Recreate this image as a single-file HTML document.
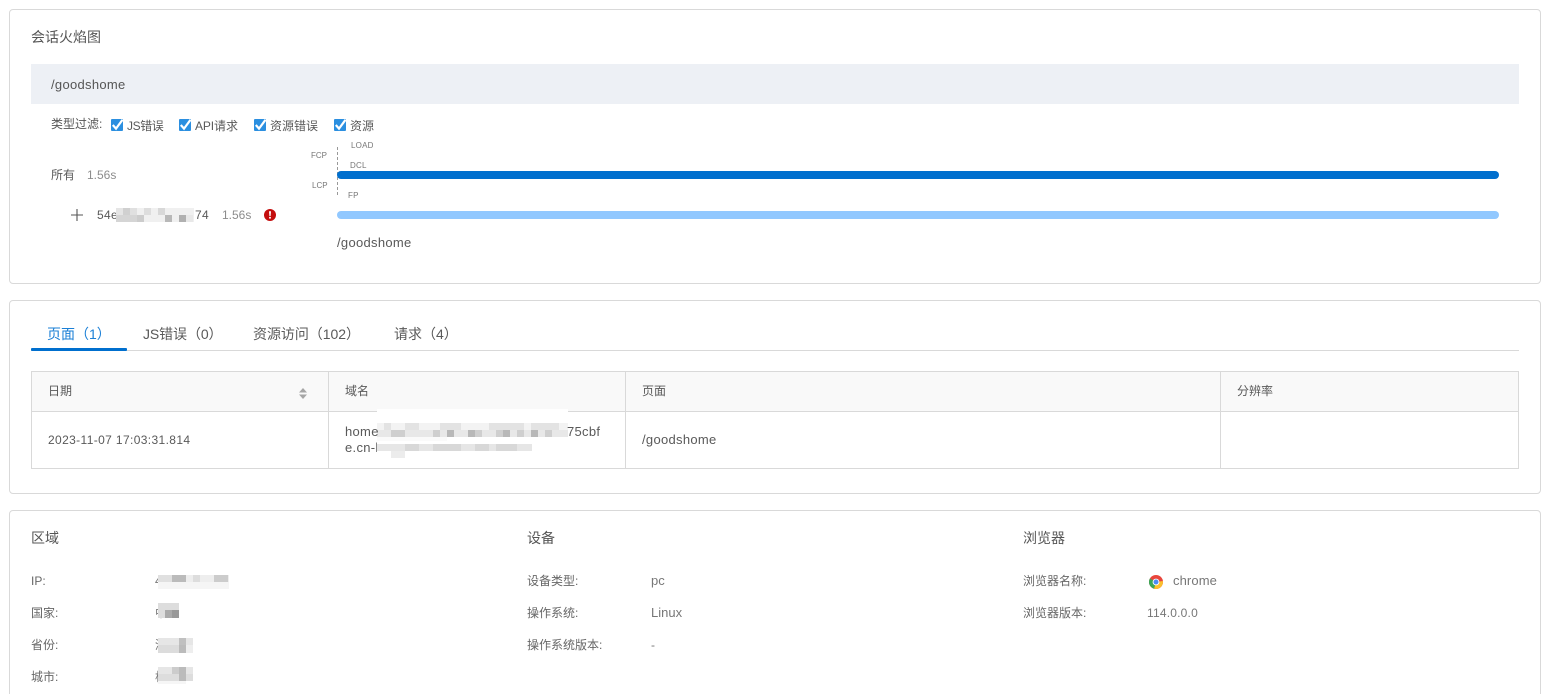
<!DOCTYPE html>
<html lang="zh">
<head>
<meta charset="utf-8">
<style>
html,body{margin:0;padding:0;background:#fff;width:1550px;height:694px;overflow:hidden}
body{position:relative;font-family:"Liberation Sans","Noto Sans CJK SC",sans-serif;font-size:12px;color:#595959}
.a{position:absolute;white-space:nowrap;line-height:16px}
.card{position:absolute;left:9px;width:1530px;border:1px solid #d9d9d9;border-radius:4px;background:#fff;box-sizing:content-box}
.s{font-size:13px;letter-spacing:.3px}
.g{color:#8c8c8c}
.cb{position:absolute;width:12px;height:12px;background:#2b8fe0;border-radius:1px}
.cb svg{position:absolute;left:0;top:0;overflow:visible}
.tiny{font-size:8px;color:#777;letter-spacing:.2px;line-height:10px}
.lbl{color:#666}
.val{color:#777}
.h{font-size:14px;color:#555}
.t{font-size:14px;line-height:16px}
svg.px{position:absolute;left:0;top:0}
</style>
</head>
<body>
<div class="card" style="top:9px;height:273px"></div>
<div class="card" style="top:300px;height:192px"></div>
<div class="card" style="top:510px;height:200px"></div>

<div class="a h" style="left:31px;top:29px">会话火焰图</div>
<div style="position:absolute;left:31px;top:64px;width:1488px;height:40px;background:#edf0f5"></div>
<div class="a s" style="left:51px;top:77px;color:#555">/goodshome</div>

<div class="a" style="left:51px;top:116px;color:#555">类型过滤:</div>
<div class="cb" style="left:111px;top:119px"><svg width="12" height="12"><path d="M1.8 6L5 9.6L11.5 .8" fill="none" stroke="#fff" stroke-width="2.2"/></svg></div>
<div class="a" style="left:127px;top:118px;letter-spacing:-.4px">JS错误</div>
<div class="cb" style="left:179px;top:119px"><svg width="12" height="12"><path d="M1.8 6L5 9.6L11.5 .8" fill="none" stroke="#fff" stroke-width="2.2"/></svg></div>
<div class="a" style="left:195px;top:118px;letter-spacing:-.1px">API请求</div>
<div class="cb" style="left:254px;top:119px"><svg width="12" height="12"><path d="M1.8 6L5 9.6L11.5 .8" fill="none" stroke="#fff" stroke-width="2.2"/></svg></div>
<div class="a" style="left:270px;top:118px">资源错误</div>
<div class="cb" style="left:334px;top:119px"><svg width="12" height="12"><path d="M1.8 6L5 9.6L11.5 .8" fill="none" stroke="#fff" stroke-width="2.2"/></svg></div>
<div class="a" style="left:350px;top:118px">资源</div>

<div class="a" style="left:51px;top:167px">所有</div>
<div class="a g" style="left:87px;top:167px">1.56s</div>

<svg style="position:absolute;left:71px;top:209px" width="12" height="12"><path d="M6 0V12M0 6H12" stroke="#555" stroke-width="1.1"/></svg>
<div class="a" style="left:97px;top:207px;letter-spacing:.3px">54e</div>
<div class="a" style="left:195px;top:207px;letter-spacing:.3px">74</div>
<div class="a g" style="left:222px;top:207px">1.56s</div>
<svg style="position:absolute;left:264px;top:209px" width="12" height="12" viewBox="0 0 12 12"><circle cx="6" cy="6" r="6" fill="#c40d0d"/><path d="M5 2.2H7L6.6 7H5.4Z" fill="#fff"/><circle cx="6" cy="8.8" r="1" fill="#fff"/></svg>

<div class="a tiny" style="left:351px;top:141px">LOAD</div>
<div class="a tiny" style="left:311px;top:151px;letter-spacing:0">FCP</div>
<div class="a tiny" style="left:350px;top:161px">DCL</div>
<div class="a tiny" style="left:312px;top:181px;letter-spacing:0">LCP</div>
<div class="a tiny" style="left:348px;top:191px">FP</div>
<div style="position:absolute;left:337px;top:147px;height:48px;border-left:1px dashed #999"></div>
<div style="position:absolute;left:337px;top:171px;width:1162px;height:8px;border-radius:4px;background:#006fce"></div>
<div style="position:absolute;left:337px;top:211px;width:1162px;height:8px;border-radius:4px;background:#91c8ff"></div>
<div class="a s" style="left:337px;top:235px">/goodshome</div>

<!-- tabs -->
<div class="a t" style="left:47px;top:326px;color:#1a7fd6">页面（1）</div>
<div class="a t" style="left:143px;top:326px;letter-spacing:-.1px">JS错误（0）</div>
<div class="a t" style="left:253px;top:326px;letter-spacing:-.05px">资源访问（102）</div>
<div class="a t" style="left:394px;top:326px">请求（4）</div>
<div style="position:absolute;left:31px;top:350px;width:1488px;height:1px;background:#d9d9d9"></div>
<div style="position:absolute;left:31px;top:348px;width:96px;height:3px;background:#006fce;border-radius:1px"></div>

<!-- table -->
<div style="position:absolute;left:31px;top:371px;width:1486px;height:96px;border:1px solid #d9d9d9"></div>
<div style="position:absolute;left:32px;top:372px;width:1486px;height:39px;background:#f9f9f9"></div>
<div style="position:absolute;left:31px;top:411px;width:1488px;height:1px;background:#d9d9d9"></div>
<div style="position:absolute;left:328px;top:372px;width:1px;height:96px;background:#d9d9d9"></div>
<div style="position:absolute;left:625px;top:372px;width:1px;height:96px;background:#d9d9d9"></div>
<div style="position:absolute;left:1220px;top:372px;width:1px;height:96px;background:#d9d9d9"></div>
<div class="a" style="left:48px;top:383px">日期</div>
<svg style="position:absolute;left:298px;top:388px" width="10" height="12"><path d="M5 0L9 4.5H1Z M5 11L9 6.5H1Z" fill="#a6a6a6"/></svg>
<div class="a" style="left:345px;top:383px">域名</div>
<div class="a" style="left:642px;top:383px">页面</div>
<div class="a" style="left:1237px;top:383px">分辨率</div>
<div class="a" style="left:48px;top:432px;letter-spacing:.37px">2023-11-07 17:03:31.814</div>

<!-- info -->
<div class="a h" style="left:31px;top:530px">区域</div>
<div class="a h" style="left:527px;top:530px">设备</div>
<div class="a h" style="left:1023px;top:530px">浏览器</div>
<div class="a lbl" style="left:31px;top:573px">IP:</div>
<div class="a lbl" style="left:31px;top:605px">国家:</div>
<div class="a lbl" style="left:31px;top:637px">省份:</div>
<div class="a lbl" style="left:31px;top:669px">城市:</div>
<div class="a val" style="left:155px;top:573px">4</div>
<div class="a val" style="left:155px;top:605px">中</div>
<div class="a val" style="left:155px;top:637px">浙</div>
<div class="a val" style="left:155px;top:669px">杭</div>

<div class="a lbl" style="left:527px;top:573px">设备类型:</div>
<div class="a lbl" style="left:527px;top:605px">操作系统:</div>
<div class="a lbl" style="left:527px;top:637px">操作系统版本:</div>
<div class="a val" style="left:651px;top:573px;font-size:13px">pc</div>
<div class="a val" style="left:651px;top:605px;font-size:13px">Linux</div>
<div class="a val" style="left:651px;top:637px">-</div>

<div class="a lbl" style="left:1023px;top:573px">浏览器名称:</div>
<div class="a lbl" style="left:1023px;top:605px">浏览器版本:</div>
<svg style="position:absolute;left:1149px;top:575px" width="14" height="14" viewBox="0 0 14 14">
<circle cx="7" cy="7" r="7" fill="#e8453c"/>
<path d="M7 7L13.9 6A7 7 0 0 1 5 13.7Z" fill="#fbc02d"/>
<path d="M7 7L5 13.7A7 7 0 0 1 .9 3.5Z" fill="#3aa757"/>
<circle cx="7" cy="7" r="3.4" fill="#fff"/><circle cx="7" cy="7" r="2.5" fill="#4a8bf5"/>
</svg>
<div class="a val s" style="left:1173px;top:573px;letter-spacing:.1px">chrome</div>
<div class="a val" style="left:1147px;top:605px;letter-spacing:.2px">114.0.0.0</div>

<!-- mosaics -->
<svg class="px" width="1550" height="694" shape-rendering="crispEdges">
<rect x="377" y="409" width="191" height="3" fill="#fff"/>
<!-- 54e mosaic -->
<rect x="116" y="208" width="78" height="14" fill="#f0f0f0"/>
<rect x="116" y="208" width="7" height="7" fill="#e5e5e5"/><rect x="123" y="208" width="7" height="7" fill="#d0d0d0"/><rect x="130" y="208" width="7" height="7" fill="#e0e0e0"/><rect x="144" y="208" width="7" height="7" fill="#ddd"/><rect x="158" y="208" width="7" height="7" fill="#d8d8d8"/>
<rect x="116" y="215" width="21" height="7" fill="#d5d5d5"/><rect x="137" y="215" width="7" height="7" fill="#ccc"/><rect x="165" y="215" width="7" height="7" fill="#b8b8b8"/><rect x="179" y="215" width="7" height="7" fill="#b0b0b0"/><rect x="186" y="215" width="7" height="7" fill="#e8e8e8"/>
<!-- domain mosaic -->
<rect x="377" y="423" width="191" height="7" fill="#f3f3f3"/>
<rect x="377" y="430" width="191" height="7" fill="#e8e8e8"/>
<g fill="#e3e3e3"><rect x="384" y="423" width="7" height="7"/><rect x="405" y="423" width="14" height="7"/><rect x="440" y="423" width="21" height="7"/><rect x="489" y="423" width="35" height="7"/><rect x="531" y="423" width="28" height="7"/></g>
<g fill="#cfcfcf"><rect x="391" y="430" width="14" height="7"/><rect x="433" y="430" width="7" height="7"/><rect x="475" y="430" width="7" height="7"/><rect x="496" y="430" width="7" height="7"/><rect x="517" y="430" width="7" height="7"/><rect x="545" y="430" width="7" height="7"/></g>
<g fill="#b8b8b8"><rect x="447" y="430" width="7" height="7"/><rect x="468" y="430" width="7" height="7"/><rect x="503" y="430" width="7" height="7"/><rect x="531" y="430" width="7" height="7"/></g>
<rect x="377" y="437" width="70" height="4" fill="#fafafa"/>
<rect x="377" y="444" width="155" height="7" fill="#e6e6e6"/>
<rect x="391" y="451" width="14" height="7" fill="#ececec"/>
<g fill="#d8d8d8"><rect x="405" y="444" width="14" height="7"/><rect x="433" y="444" width="28" height="7"/><rect x="475" y="444" width="14" height="7"/><rect x="496" y="444" width="21" height="7"/></g>
<!-- IP mosaic -->
<rect x="158" y="575" width="71" height="7" fill="#eee"/><rect x="158" y="582" width="71" height="7" fill="#f5f5f5"/>
<rect x="158" y="575" width="14" height="7" fill="#e0e0e0"/><rect x="172" y="575" width="14" height="7" fill="#bbb"/><rect x="193" y="575" width="7" height="7" fill="#ddd"/><rect x="214" y="575" width="14" height="7" fill="#ccc"/>
<!-- country -->
<rect x="158" y="603" width="21" height="15" fill="#ddd"/><rect x="165" y="610" width="7" height="8" fill="#aaa"/><rect x="172" y="610" width="7" height="8" fill="#999"/>
<!-- province -->
<rect x="158" y="638" width="35" height="7" fill="#e6e6e6"/><rect x="158" y="645" width="35" height="8" fill="#dcdcdc"/><rect x="179" y="638" width="7" height="7" fill="#c0c0c0"/><rect x="179" y="645" width="7" height="8" fill="#bbb"/><rect x="186" y="645" width="7" height="8" fill="#eee"/>
<!-- city -->
<rect x="158" y="667" width="35" height="7" fill="#e6e6e6"/><rect x="158" y="674" width="35" height="7" fill="#ddd"/><rect x="172" y="667" width="7" height="7" fill="#ccc"/><rect x="179" y="667" width="7" height="14" fill="#bbb"/><rect x="158" y="681" width="28" height="3" fill="#f6f6f6"/>
</svg>
<div class="a s" style="left:345px;top:424px">home</div>
<div class="a s" style="left:567px;top:424px">75cbf</div>
<div class="a s" style="left:345px;top:440px;width:32px;overflow:hidden">e.cn-h</div>
<div class="a s" style="left:642px;top:432px">/goodshome</div>
</body>
</html>
